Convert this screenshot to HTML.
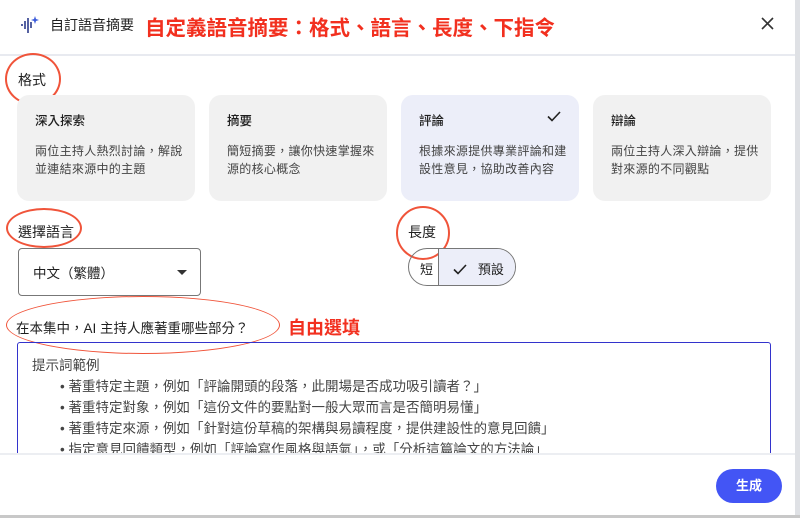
<!DOCTYPE html>
<html><head><meta charset="utf-8"><style>
*{margin:0;padding:0;box-sizing:border-box}
body{width:800px;height:518px;overflow:hidden;background:#fff;font-family:"Liberation Sans","Noto Sans CJK TC",sans-serif;color:#1f1f1f;position:relative}
.abs{position:absolute}
.card{position:absolute;top:95px;width:178px;height:106px;border-radius:12px;background:#f1f1f1;padding:15px 10px 0 18px}
.card h4{font-size:12.5px;font-weight:500;margin-bottom:13px}
.card p{font-size:12px;line-height:18px;color:#444;width:152px;letter-spacing:0.3px}
.red{color:#f2301f;font-weight:700}
.circ{position:absolute;border:2px solid #f0543a;border-radius:50%}
</style></head><body>
<svg class="abs" style="left:20px;top:15px" width="20" height="20" viewBox="0 0 20 20"><g stroke="#2b3a8a" stroke-width="1.6"><line x1="2" y1="9" x2="2" y2="11"/><line x1="5" y1="6" x2="5" y2="14"/><line x1="8" y1="3" x2="8" y2="18"/><line x1="11" y1="7" x2="11" y2="13"/></g><path d="M15 1 L16 4 L19 5 L16 6 L15 9 L14 6 L11 5 L14 4Z" fill="#3b5bdb"/></svg>
<div class="abs" style="left:50px;top:15px;font-size:14px">自訂語音摘要</div>
<div class="abs red" style="left:145px;top:11px;font-size:20.5px">自定義語音摘要：格式、語言、長度、下指令</div>
<svg class="abs" style="left:761px;top:17px" width="13" height="13" viewBox="0 0 13 13"><path d="M1 1L12 12M12 1L1 12" stroke="#333" stroke-width="1.6"/></svg>
<div class="abs" style="left:0;top:54px;width:795px;height:2px;background:#e8eaf0"></div>
<div class="abs" style="left:795px;top:0;width:5px;height:518px;background:#dfe1e5"></div>
<div class="abs" style="left:18px;top:70px;font-size:14px">格式</div>
<div class="circ" style="left:5px;top:53px;width:56px;height:52px"></div>
<div class="card" style="left:17px"><h4>深入探索</h4><p>兩位主持人熱烈討論，解說並連結來源中的主題</p></div>
<div class="card" style="left:209px"><h4>摘要</h4><p>簡短摘要，讓你快速掌握來源的核心概念</p></div>
<div class="card" style="left:401px;background:#eceef9"><h4>評論<svg style="float:right;margin-right:8px;margin-top:1px" width="14" height="11" viewBox="0 0 14 11"><path d="M1 5.5L5 9.5L13 1" stroke="#222" stroke-width="1.6" fill="none"/></svg></h4><p>根據來源提供專業評論和建設性意見，協助改善內容</p></div>
<div class="card" style="left:593px"><h4>辯論</h4><p>兩位主持人深入辯論，提供對來源的不同觀點</p></div>
<div class="abs" style="left:18px;top:222px;font-size:14px">選擇語言</div>
<div class="circ" style="left:6px;top:208px;width:76px;height:40px"></div>
<div class="abs" style="left:18px;top:248px;width:183px;height:48px;border:1px solid #777;border-radius:4px;padding:13px 14px;font-size:13.5px">中文（繁體）<span style="position:absolute;right:13px;top:21px;border-left:5px solid transparent;border-right:5px solid transparent;border-top:5px solid #333"></span></div>
<div class="abs" style="left:408px;top:222px;font-size:14px">長度</div>
<div class="circ" style="left:396px;top:206px;width:54px;height:54px"></div>
<div class="abs" style="left:408px;top:248px;width:108px;height:38px;border:1px solid #777;border-radius:19px;overflow:hidden;font-size:13px">
<div class="abs" style="left:0;top:0;width:30px;height:36px;padding:10px 0 0 11px;border-right:1px solid #777">短</div>
<div class="abs" style="left:30px;top:0;width:78px;height:36px;background:#eceef9;padding:10px 0 0 14px"><svg width="14" height="11" viewBox="0 0 14 11" style="vertical-align:-1px"><path d="M1 5.5L5 9.5L13 1" stroke="#222" stroke-width="1.6" fill="none"/></svg>&nbsp;&nbsp; 預設</div></div>
<div class="abs" style="left:16px;top:317px;font-size:13.5px">在本集中，AI 主持人應著重哪些部分？</div>
<div class="circ" style="left:6px;top:296px;width:274px;height:58px;border-width:1.5px"></div>
<div class="abs red" style="left:288px;top:314px;font-size:18px">自由選填</div>
<div class="abs" style="left:17px;top:342px;width:754px;height:130px;border:1.5px solid #3333cc;border-radius:3px;padding:12px 14px;font-size:13.5px;line-height:21px;color:#444">提示詞範例
<div style="padding-left:28px">• 著重特定主題，例如「評論開頭的段落，此開場是否成功吸引讀者？」<br>• 著重特定對象，例如「這份文件的要點對一般大眾而言是否簡明易懂」<br>• 著重特定來源，例如「針對這份草稿的架構與易讀程度，提供建設性的意見回饋」<br>• 指定意見回饋類型，例如「評論寫作風格與語氣」，或「分析這篇論文的方法論」</div></div>
<div class="abs" style="left:0;top:453px;width:795px;height:65px;background:#fff;border-top:2px solid #eceef2;border-radius:0 0 12px 12px"></div>
<div class="abs" style="left:716px;top:469px;width:66px;height:34px;border-radius:17px;background:#4355f5;color:#fff;font-size:13px;font-weight:700;text-align:center;line-height:34px">生成</div>
<div class="abs" style="left:0;top:515px;width:800px;height:3px;background:#c8c8c8"></div>
</body></html>
